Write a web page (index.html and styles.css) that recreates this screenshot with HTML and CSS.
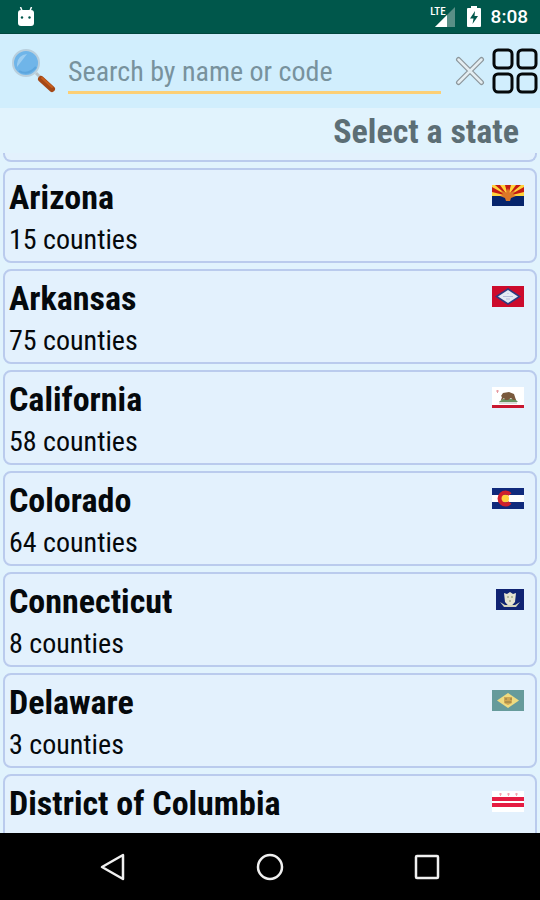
FILE: index.html
```html
<!DOCTYPE html>
<html lang="en">
<head>
<meta charset="utf-8">
<meta name="viewport" content="width=device-width, initial-scale=1">
<title>Select a state</title>
<link rel="stylesheet" href="styles.css">
</head>
<body>
<header class="status">
  <svg class="status-app" width="18" height="20" viewBox="0 0 18 20" aria-hidden="true"><path d="M3.500 0l2 5M14.500 0l-2 5" stroke="#fff" stroke-width="1.500"/><rect x="1" y="3" width="16" height="16" rx="3" fill="#fff"/><circle cx="5" cy="10.500" r="1.200" fill="#00574b"/><circle cx="12.500" cy="10.500" r="1.200" fill="#00574b"/></svg>
  <div class="status-right">
    <span class="network">LTE</span>
    <svg class="signal" width="20" height="20" viewBox="0 0 20 20" aria-hidden="true"><path d="M20 0V20H0z" fill="#598f86"/><path d="M12 8V20H0z" fill="#fff"/></svg>
    <svg class="battery" width="14" height="21" viewBox="0 0 14 21" aria-hidden="true"><path d="M4 0h6v2h3q1 0 1 1v17q0 1-1 1H1q-1 0-1-1V3q0-1 1-1h3z" fill="#fff"/><path d="M8 5L3 12.500h3.500L5.500 18 11 10H7.500z" fill="#00574b"/></svg>
    <time class="clock">8:08</time>
  </div>
</header>
<div class="search">
  <svg class="lens" width="46" height="46" viewBox="0 0 46 46" aria-hidden="true"><path d="M24 25l6 6" stroke="#b8c4cb" stroke-width="3"/><path d="M29 31l11 10" stroke="#a44716" stroke-width="6" stroke-linecap="round"/><path d="M30 30l10 9" stroke="#c65d1c" stroke-width="2" stroke-linecap="round"/><circle cx="14" cy="15" r="13" fill="#6fb5e9" stroke="#b9cfdd" stroke-width="2"/><path d="M5 16Q6 7 15 6L5 19z" fill="#9bcdf1"/><path d="M7 23Q16 28 24 19" fill="none" stroke="#5ca6de" stroke-width="2"/></svg>
  <input class="field" type="text" aria-label="Search by name or code" placeholder="Search by name or code">
  <button class="icon-button clear" type="button" aria-label="Clear"><svg width="30" height="30" viewBox="0 0 30 30"><path d="M3.500 3.500L26.500 26.500M26.500 3.500L3.500 26.500" stroke="#8c969b" stroke-width="5" stroke-linecap="round"/><path d="M3.500 3.500L26.500 26.500M26.500 3.500L3.500 26.500" stroke="#e4edf1" stroke-width="2.500" stroke-linecap="round"/></svg></button>
  <button class="icon-button" type="button" aria-label="Grid view"><svg width="46" height="46" viewBox="0 0 46 46" fill="none" stroke="#05090b" stroke-width="3"><rect x="2" y="2" width="18" height="18" rx="4"/><rect x="26" y="2" width="18" height="18" rx="4"/><rect x="2" y="26" width="18" height="18" rx="4"/><rect x="26" y="26" width="18" height="18" rx="4"/></svg></button>
</div>
<main class="content">
  <h1 class="title">Select a state</h1>
  <ul class="states">
    <li class="card card-above"></li>
    <li class="card"><div><h2>Arizona</h2><p>15 counties</p></div>
      <svg class="flag" width="32" height="21" viewBox="0 0 32 21"><path d="M0 0h32v21H0z" fill="#c51a14"/><path d="M16 11L0 2V0h3zM16 11L8 0h5zM16 11L19 0h5zM16 11L29 0h3v2zM16 11L0 11V7zM16 11L32 7v4z" fill="#ffd33c"/><path d="M0 11h32v10H0z" fill="#06246b"/><path d="M16 3l2 5 5-3-2 5 3 1-5 2-1 3h-4l-1-3-5-2 3-1-2-5 5 3z" fill="#dc7828"/></svg></li>
    <li class="card"><div><h2>Arkansas</h2><p>75 counties</p></div>
      <svg class="flag" width="32" height="21" viewBox="0 0 32 21"><path d="M0 0h32v21H0z" fill="#cc0b2c"/><path d="M16 2L29 10.500 16 19 3 10.500z" fill="#2d3b80"/><path d="M16 4l10 6.500-10 6.500-10-6.500z" fill="#e4eaf5"/><path d="M11 10.500h10M16 7v1M14 13h4" stroke="#b4bddb"/></svg></li>
    <li class="card"><div><h2>California</h2><p>58 counties</p></div>
      <svg class="flag" width="32" height="21" viewBox="0 0 32 21"><path d="M0 0h32v21H0z" fill="#fff"/><path d="M0 18h32v3H0z" fill="#c91830"/><path d="M4 4h3M5.500 3v3" stroke="#e69aa1"/><path d="M8 14l3-2h12l3 3H7z" fill="#699462"/><path d="M9 9l2-3 6-1 5 2 2 6h-3l-2-2-3 2h-3l-1-2-2 2H9l1-3z" fill="#79593c"/><path d="M7 16h18" stroke="#b8c1b8"/></svg></li>
    <li class="card"><div><h2>Colorado</h2><p>64 counties</p></div>
      <svg class="flag" width="32" height="21" viewBox="0 0 32 21"><path d="M0 0h32v21H0z" fill="#102a7c"/><path d="M0 7h32v7H0z" fill="#fff"/><circle cx="13" cy="10.500" r="4" fill="#ffd33c"/><path d="M18 6.500A6 6 0 1 0 18 14.500" fill="none" stroke="#d0202c" stroke-width="4"/></svg></li>
    <li class="card"><div><h2>Connecticut</h2><p>8 counties</p></div>
      <svg class="flag" width="28" height="21" viewBox="0 0 28 21"><path d="M0 0h28v21H0z" fill="#102372"/><path d="M8 4l3 1 3-2 3 2 3-1-1 9q-2 3-5 4-3-1-5-4z" fill="#e6e3d0"/><path d="M4 13l5 3h10l5-3-4 5H8z" fill="#d3d2bb"/><path d="M11 8h2M15 8h2M13 12h2" stroke="#b5b99c" stroke-width="2"/></svg></li>
    <li class="card"><div><h2>Delaware</h2><p>3 counties</p></div>
      <svg class="flag" width="32" height="21" viewBox="0 0 32 21"><path d="M0 0h32v21H0z" fill="#669b9b"/><path d="M16 3l11 7.500L16 18 5 10.500z" fill="#efdb80"/><path d="M12 7h8v6l-4 2-4-2z" fill="#cfa653"/><path d="M13 9h2M18 9h2M13 12h6" stroke="#8a7c48"/></svg></li>
    <li class="card card-last"><div><h2>District of Columbia</h2></div>
      <svg class="flag" width="32" height="21" viewBox="0 0 32 21"><path d="M0 0h32v21H0z" fill="#fff"/><path d="M0 6h32v4H0zM0 12h32v4H0z" fill="#e51c42"/><path d="M7 3h3M15 3h3M23 3h3M8.500 2v3M16.500 2v3M24.500 2v3" stroke="#f5a4b2"/></svg></li>
  </ul>
</main>
<nav class="nav">
  <button class="icon-button" type="button" aria-label="Back"><svg width="28" height="28" viewBox="0 0 28 28"><path d="M24 2v24L3 14z" fill="none" stroke="#f0f0f0" stroke-width="2.500" stroke-linejoin="round"/></svg></button>
  <button class="icon-button" type="button" aria-label="Home"><svg width="28" height="28" viewBox="0 0 28 28"><circle cx="14" cy="14" r="12" fill="none" stroke="#f0f0f0" stroke-width="2.500"/></svg></button>
  <button class="icon-button" type="button" aria-label="Recent apps"><svg width="28" height="28" viewBox="0 0 28 28"><rect x="3" y="3" width="22" height="22" rx="1" fill="none" stroke="#f0f0f0" stroke-width="2.500"/></svg></button>
</nav>
</body>
</html>
```

FILE: styles.css
```css
* { box-sizing: border-box; }
body {
  margin: 0;
  height: 100vh;
  display: flex;
  flex-direction: column;
  overflow: hidden;
  font-family: "Roboto Condensed", Roboto, sans-serif;
  color: #05090c;
  background: #e1f3fd;
}
svg { display: block; flex: none; }
h1, h2, p, ul { margin: 0; padding: 0; }
.status {
  flex: none;
  height: 34px;
  display: flex;
  align-items: center;
  justify-content: space-between;
  padding: 0 12px 0 17px;
  background: #00574b;
  border-bottom: 1px solid #00473d;
  color: #fff;
}
.status-right { display: flex; align-items: center; }
.network { align-self: flex-start; font-size: 11px; line-height: 14px; font-weight: 500; margin-right: -11px; }
.battery { margin: 0 10px 0 12px; }
.clock { font-family: Roboto, sans-serif; font-size: 19px; font-weight: 500; line-height: 24px; }
.search {
  flex: none;
  height: 74px;
  display: flex;
  align-items: center;
  padding: 0 2px 0 12px;
  background: #d1eefd;
}
.field {
  flex: 1;
  min-width: 0;
  height: 46px;
  margin: 0 14px 0 10px;
  padding: 4px 0 0;
  border: 0;
  border-bottom: 3px solid #fccf75;
  background: transparent;
  color: inherit;
  font-family: inherit;
  font-size: 28px;
  outline: 0;
}
.field::placeholder { color: #78929d; opacity: 1; }
.icon-button { flex: none; padding: 0; border: 0; background: transparent; }
.clear { margin-right: 7px; }
.content { flex: 1; min-height: 0; display: flex; flex-direction: column; }
.title {
  flex: none;
  padding: 2px 21px 0 0;
  font-size: 34px;
  line-height: 43px;
  text-align: right;
  color: #5c6e75;
}
.states {
  flex: 1;
  min-height: 0;
  overflow: hidden;
  display: flex;
  flex-direction: column;
  gap: 6px;
  padding: 0 3px;
  list-style: none;
}
.card {
  flex: none;
  display: flex;
  align-items: flex-start;
  justify-content: space-between;
  padding: 5px 11px 0 4px;
  border: 2px solid #bacbed;
  border-radius: 8px;
  background: #e3f1fd;
}
.card-above { height: 9px; padding: 0; border-top: 0; border-radius: 0 0 8px 8px; }
.card-last { min-height: 95px; }
.card h2 { font-size: 34px; line-height: 44px; }
.card p { font-size: 28px; line-height: 42px; }
.flag { margin-top: 10px; }
.nav {
  flex: none;
  height: 67px;
  display: flex;
  align-items: center;
  justify-content: center;
  gap: 129px;
  background: #000;
}
```
